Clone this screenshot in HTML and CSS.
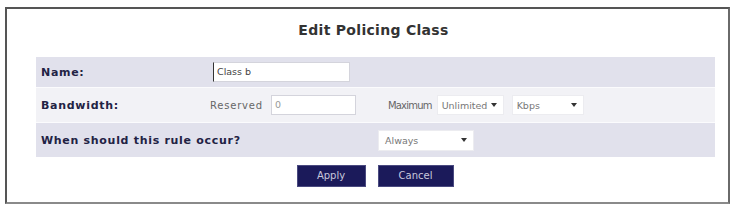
FILE: index.html
```html
<!DOCTYPE html>
<html>
<head>
<meta charset="utf-8">
<link rel="stylesheet" href="styles.css">
</head>
<body>
<div class="panel">
  <h1 class="title">Edit Policing Class</h1>
  <div class="form">
    <div class="row row-dark">
      <div class="label">Name:</div>
      <div class="field field-name">
        <div class="input input-name">Class b</div>
      </div>
    </div>
    <div class="row row-light">
      <div class="label">Bandwidth:</div>
      <div class="field field-bw">
        <span class="text text-res">Reserved</span>
        <div class="input input-reserved">0</div>
        <span class="text text-max">Maximum</span>
        <div class="select select-unl"><span>Unlimited</span><i class="arrow"></i></div>
        <div class="select select-kbps"><span>Kbps</span><i class="arrow"></i></div>
      </div>
    </div>
    <div class="row row-dark row-when">
      <div class="label">When should this rule occur?</div>
      <div class="field field-when">
        <div class="select select-always"><span>Always</span><i class="arrow"></i></div>
      </div>
    </div>
  </div>
  <div class="buttons">
    <div class="btn btn-apply">Apply</div>
    <div class="btn btn-cancel">Cancel</div>
  </div>
</div>
</body>
</html>
```

FILE: styles.css
```css
html, body {
  margin: 0;
  padding: 0;
  background: #ffffff;
}
body {
  padding: 7px 4px 0 5px;
  font-family: "DejaVu Sans", Verdana, sans-serif;
}
.panel {
  width: 725px;
  height: 197px;
  box-sizing: border-box;
  border: 2px solid #555;
  border-right-color: #6a6a6a;
  border-bottom-color: #8a8a8a;
  padding: 0 17px 0 29px;
  background: #fff;
}
.title {
  margin: 0;
  height: 48px;
  box-sizing: border-box;
  padding-top: 13px;
  font-size: 14px;
  font-weight: bold;
  color: #333;
  text-align: center;
  letter-spacing: 0.3px;
}
.form {
  width: 679px;
  display: flex;
  flex-direction: column;
}
.row {
  display: flex;
  align-items: center;
  border-bottom: 1px solid #fbfbfd;
}
.row-dark {
  background: #e1e1ec;
}
.row-light {
  background: #f2f2f6;
}
.row:nth-child(1) { height: 30px; }
.row:nth-child(2) { height: 34px; }
.row:nth-child(3) { height: 34px; border-bottom: 0; }
.label {
  width: 172px;
  padding-left: 5px;
  font-size: 11px;
  font-weight: bold;
  letter-spacing: 0.7px;
  color: #222244;
  white-space: nowrap;
}
.field {
  display: flex;
  align-items: center;
  font-size: 10px;
  color: #555;
}
.field-name { margin-left: 0; }
.field-bw { margin-left: -3px; }
.field-when { margin-left: 165px; }
.text {
  color: #666;
}
.text-res { letter-spacing: 0.8px; }
.text-max { margin-left: 32px; margin-right: 5px; letter-spacing: -0.8px; }
.input {
  background: #fff;
  border: 1px solid #d4d4dc;
  box-sizing: border-box;
  height: 20px;
  line-height: 18px;
  padding-left: 3px;
  font-size: 9.5px;
  color: #444;
}
.input-name {
  width: 137px;
  border-left: 1px solid #333;
}
.input-reserved {
  width: 85px;
  margin-left: 8px;
  color: #999;
}
.select {
  background: #fff;
  height: 20px;
  box-sizing: border-box;
  border: 1px solid #ececf0;
  display: flex;
  align-items: center;
  justify-content: space-between;
  padding: 0 6px 0 4px;
  font-size: 9.5px;
  color: #777;
}
.select-unl { width: 67px; }
.select-kbps { width: 72px; margin-left: 8px; }
.select-always { width: 96px; height: 21px; padding-left: 6px; }
.arrow {
  width: 0;
  height: 0;
  border-left: 3px solid transparent;
  border-right: 3px solid transparent;
  border-top: 4px solid #333;
}
.buttons {
  display: flex;
  justify-content: center;
  gap: 14px;
  margin-top: 9px;
  padding-left: 3px;
}
.btn {
  background: #1b1a5a;
  color: #c8c8dc;
  font-size: 10px;
  height: 20px;
  line-height: 20px;
  text-align: center;
  box-shadow: 0 0 0 1px #4a4a80;
}
.btn-apply { width: 67px; }
.btn-cancel { width: 74px; }
```
